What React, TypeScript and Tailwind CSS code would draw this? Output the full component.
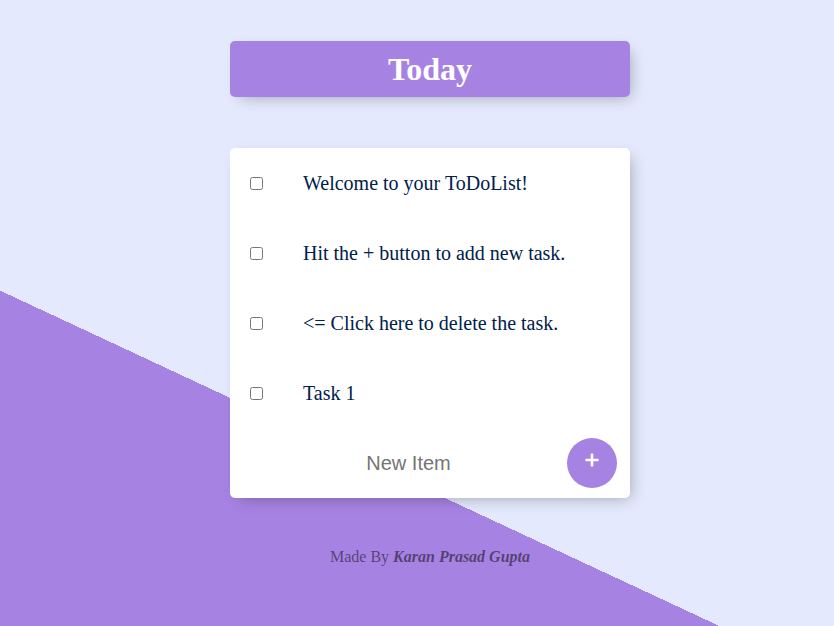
import React from 'react';

const items = [
  'Welcome to your ToDoList!',
  'Hit the + button to add new task.',
  '<= Click here to delete the task.',
  'Task 1',
];

const App: React.FC = () => {
  return (
    <div className="h-[626px] w-full overflow-hidden bg-[#E4E9FD] bg-[linear-gradient(25deg,#A683E3_50%,#E4E9FD_50%)] bg-[length:834px_970px] bg-no-repeat font-['Liberation_Serif',serif]">
      <div className="ml-[230px] w-[400px] pt-[41px]">
        {/* Heading */}
        <div className="h-[56px] rounded-[5px] bg-[#A683E3] shadow-[5px_5px_15px_-5px_rgba(0,0,0,0.3)] flex items-center justify-center">
          <h1 className="text-[32px] font-bold text-white leading-none">Today</h1>
        </div>

        {/* List */}
        <div className="mt-[51px] rounded-[5px] bg-white shadow-[5px_5px_15px_-5px_rgba(0,0,0,0.3)]">
          {items.map((text) => (
            <div key={text} className="h-[70px] flex items-center">
              <input type="checkbox" className="m-[20px] h-[13px] w-[13px]" />
              <p className="px-[20px] text-[20px] text-[#00204a]">{text}</p>
            </div>
          ))}
          <form className="h-[70px] ml-[20px] flex items-center" onSubmit={(e) => e.preventDefault()}>
            <input
              type="text"
              placeholder="New Item"
              className="w-[313px] h-[60px] pl-[4px] text-center text-[20px] font-['Liberation_Sans',sans-serif] placeholder:text-[#757575] outline-none"
            />
            <button
              type="submit"
              className="ml-[4px] h-[50px] w-[50px] rounded-full bg-[#A683E3] flex items-center justify-center pb-[6px]"
            >
              <svg width="14" height="14" viewBox="0 0 14 14">
                <path d="M7 0.5V13.5M0.5 7H13.5" stroke="#fff" strokeWidth="2.6" />
              </svg>
            </button>
          </form>
        </div>

        {/* Footer */}
        <footer className="mt-[47px] text-center text-[16px] text-[rgba(0,0,0,0.5)]">
          Made By <em className="font-bold">Karan Prasad Gupta</em>
        </footer>
      </div>
    </div>
  );
};

export default App;
